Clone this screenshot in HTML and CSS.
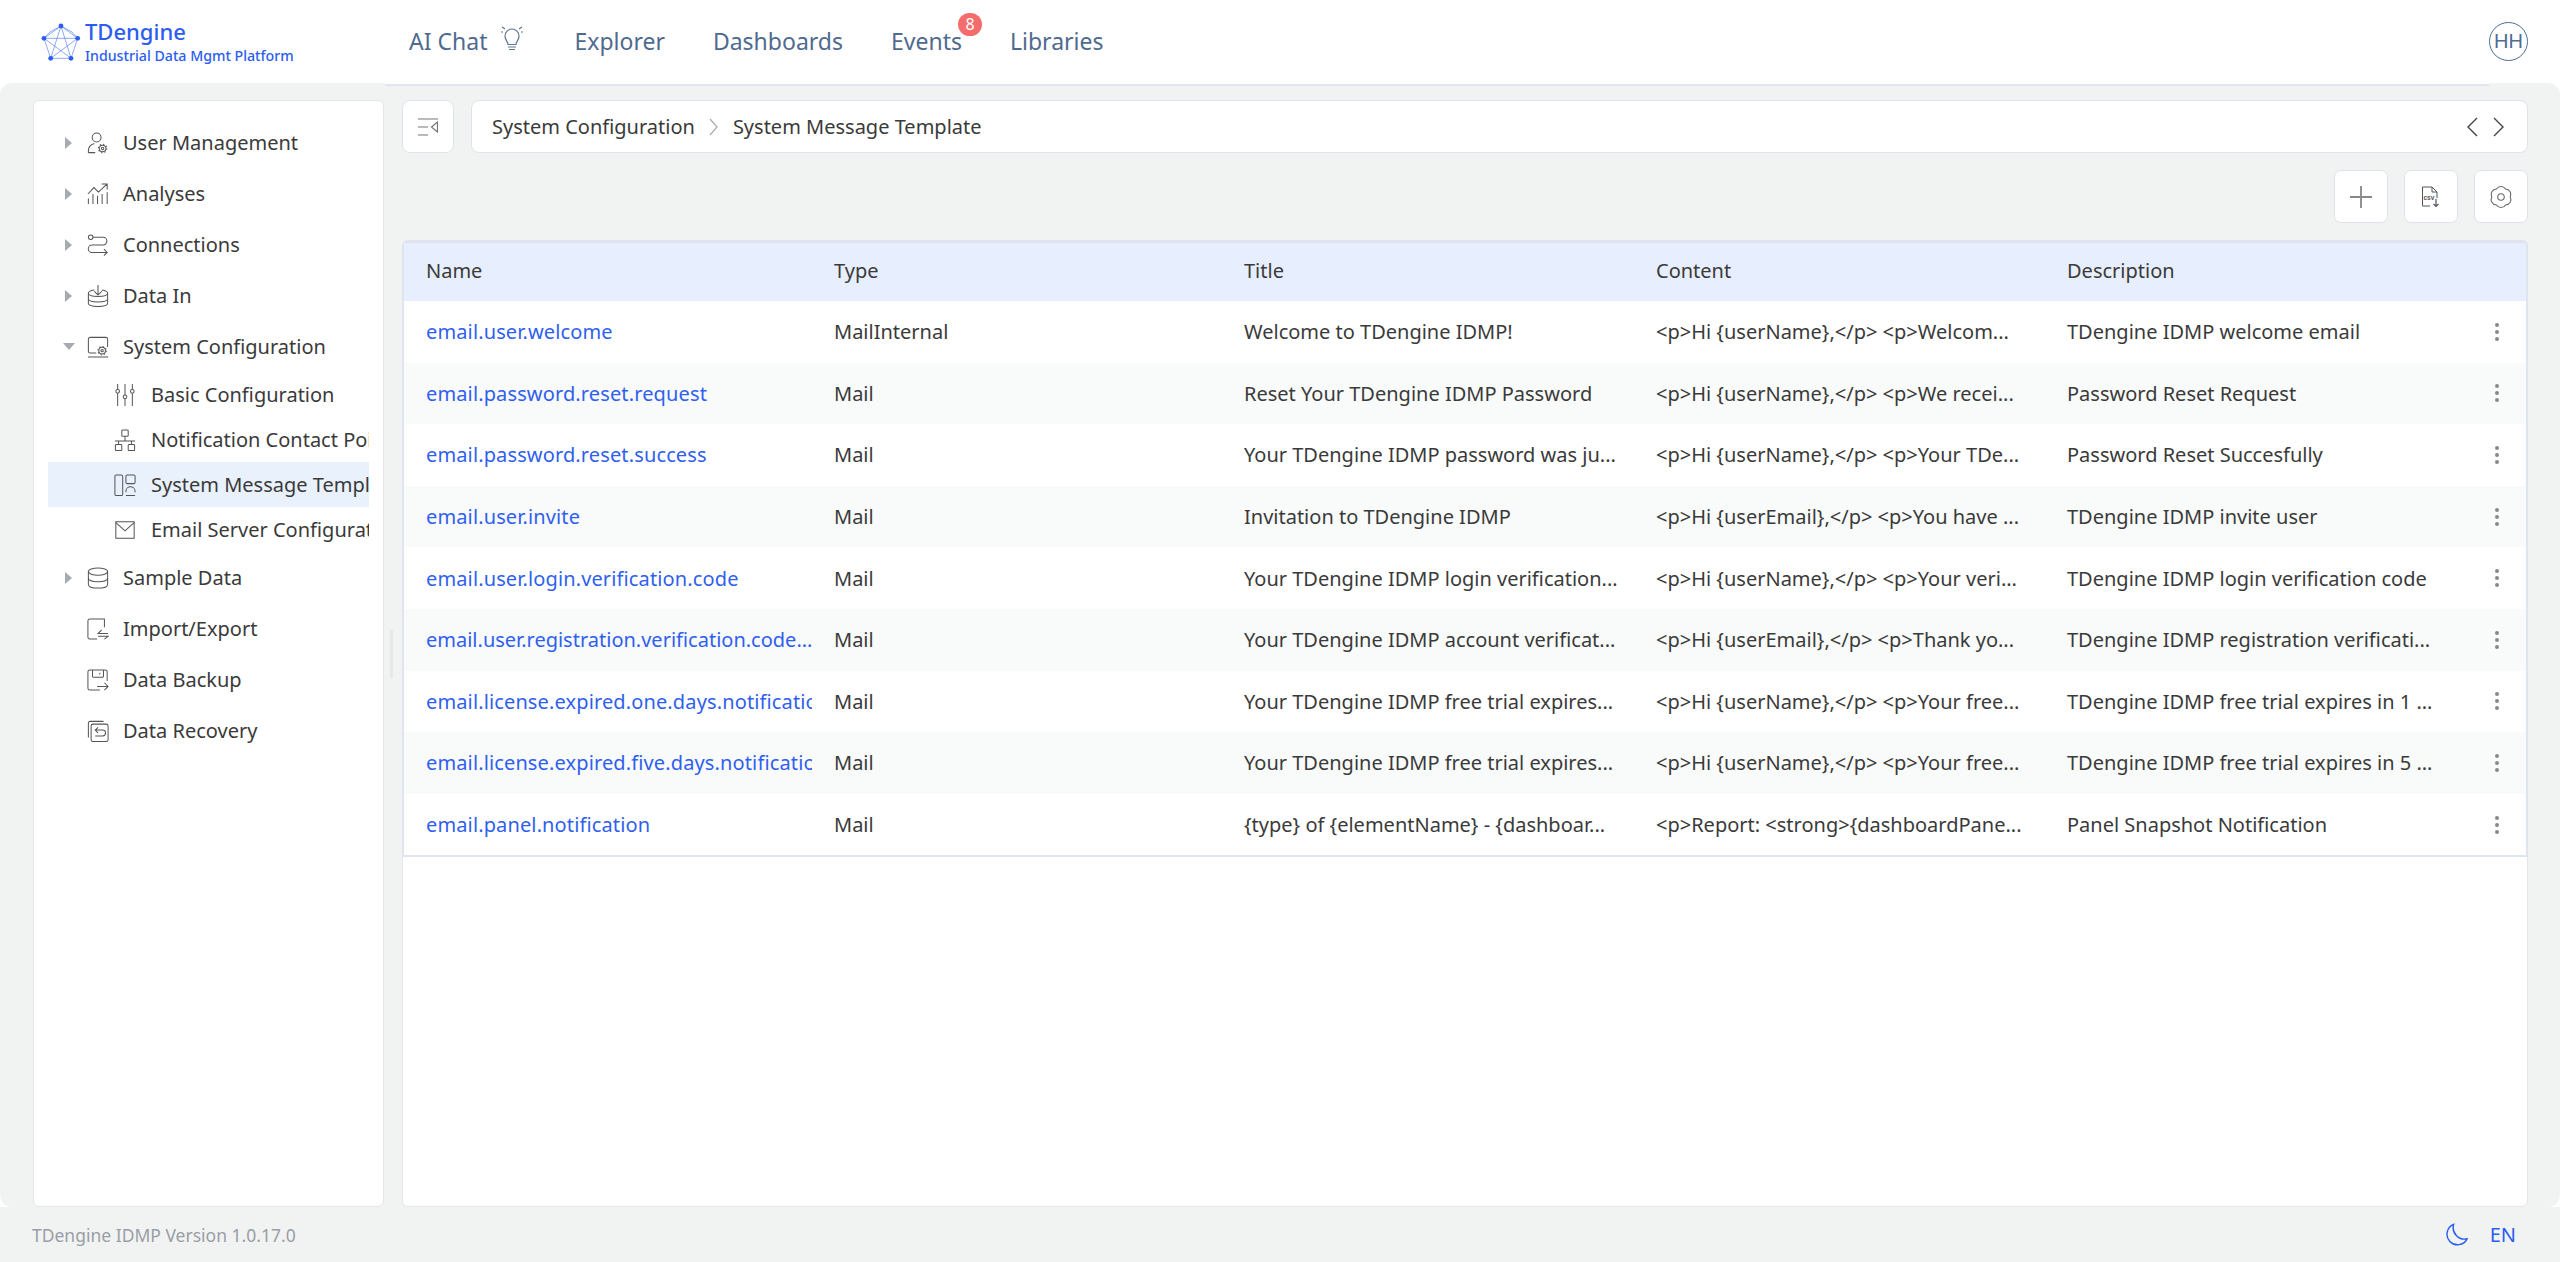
FILE: index.html
```html
<!DOCTYPE html>
<html lang="en">
<head>
  <meta charset="UTF-8" />
  <title>System Message Template</title>
  <link rel="stylesheet" href="styles.css">
</head>
<body>
  <header class="topbar">
    <div class="brand">
      <svg class="brand-logo" viewBox="0 0 40 38">
        <g fill="none" stroke="#2b5df0" stroke-width="0.7" opacity="0.75">
          <path d="M20 3 36.7 15.3 30 35.3H9.7L3 15.3Z"/>
          <path d="M20 3 30 35.3 3 15.3H36.7L9.7 35.3Z"/>
          <path d="M20 3 9 9 3 15.3M20 3 31 9 36.7 15.3"/>
        </g>
        <g fill="#2b5df0">
          <circle cx="20" cy="3" r="2.4"/>
          <circle cx="36.7" cy="15.3" r="2.4"/>
          <circle cx="30" cy="35.3" r="2.4"/>
          <circle cx="9.7" cy="35.3" r="2.4"/>
          <circle cx="3" cy="15.3" r="2.4"/>
        </g>
      </svg>
      <div class="brand-text">
        <div class="brand-name">TDengine</div>
        <div class="brand-sub">Industrial Data Mgmt Platform</div>
      </div>
    </div>
    <nav class="nav">
      <a class="nav-item nav-ai">AI Chat
        <svg class="nav-bulb" viewBox="0 0 22 26" fill="none" stroke="#5b7598" stroke-width="1.2">
          <path d="M7 18.5c0-3-3-4-3-8.5a7 7 0 0 1 14 0c0 4.500-3 5.500-3 8.500Z"/>
          <path d="M7 21h8M8 23.500h6M4 3 1 1M18 3l3-2M2 6H0M20 6h2"/>
        </svg>
      </a>
      <a class="nav-item">Explorer</a>
      <a class="nav-item">Dashboards</a>
      <a class="nav-item">Events<span class="badge">8</span></a>
      <a class="nav-item">Libraries</a>
    </nav>
    <div class="user"><span class="avatar">HH</span></div>
  </header>

  <div class="main">
    <aside class="sidebar">
      <div class="tree-row">
        <span class="caret"></span>
        <svg class="icon" viewBox="0 0 24 24"><circle cx="10.500" cy="6" r="4.800"/><path d="M1.500 22.500v-2c0-4.500 3-7 6.500-8M1.500 22.500H9"/><circle cx="17" cy="18" r="3.600"/><circle cx="17" cy="18" r="1.300"/><circle cx="17" cy="18" r="4.600" stroke-dasharray="1.500 2.100"/></svg>
        <span class="tree-label">User Management</span>
      </div>
      <div class="tree-row">
        <span class="caret"></span>
        <svg class="icon" viewBox="0 0 24 24"><path d="M1.500 17v6M6.500 12v11M11.500 14v9M16.500 12v11M22 10v13M1 12 7.500 5l5 5L22 1M16 1h6v6"/></svg>
        <span class="tree-label">Analyses</span>
      </div>
      <div class="tree-row">
        <span class="caret"></span>
        <svg class="icon" viewBox="0 0 24 24"><circle cx="4" cy="3.500" r="2.500"/><path d="M6.500 3.500h11a4.200 4.200 0 0 1 0 8.400H5.500a4.100 4.100 0 0 0 0 8.200H22M18.500 16.500l3.500 3.600-3.500 3.400"/></svg>
        <span class="tree-label">Connections</span>
      </div>
      <div class="tree-row">
        <span class="caret"></span>
        <svg class="icon" viewBox="0 0 24 24"><path d="M8 5.500c-4 .6-6.500 1.800-6.500 3.500v11c0 2 4.500 3.500 10.500 3.500S22.500 22 22.500 20V9c0-1.700-2.500-2.900-6.500-3.500"/><path d="M1.500 9c0 2 4.500 3.500 10.500 3.500S22.500 11 22.500 9M1.500 15c0 2 4.500 3.500 10.500 3.500s10.500-1.500 10.500-3.500M12 0v10.500M8 7l4 4 4-4"/></svg>
        <span class="tree-label">Data In</span>
      </div>
      <div class="tree-row">
        <span class="caret caret-open"></span>
        <svg class="icon" viewBox="0 0 24 24"><path d="M10 18.500H3.500a2 2 0 0 1-2-2V3.500a2 2 0 0 1 2-2h17a2 2 0 0 1 2 2V12M1 23h22"/><circle cx="16.500" cy="16" r="3.600"/><circle cx="16.500" cy="16" r="1.300"/><circle cx="16.500" cy="16" r="4.600" stroke-dasharray="1.500 2.100"/></svg>
        <span class="tree-label">System Configuration</span>
      </div>
      <div class="tree-row tree-child">
        <svg class="icon" viewBox="0 0 24 24"><path d="M4 0v6M4 10v14M12 0v12M12 16v8M20 0v6M20 10v14"/><circle cx="4" cy="8" r="2"/><circle cx="12" cy="14" r="2"/><circle cx="20" cy="8" r="2"/></svg>
        <span class="tree-label">Basic Configuration</span>
      </div>
      <div class="tree-row tree-child">
        <svg class="icon" viewBox="0 0 24 24"><rect x="8.500" y="1" width="7" height="7" rx="1"/><path d="M12 8v5M5 17v-4h14v4M1 13h22"/><rect x="1.500" y="17" width="7" height="6.500" rx="1"/><rect x="15.500" y="17" width="7" height="6.500" rx="1"/></svg>
        <span class="tree-label">Notification Contact Point</span>
      </div>
      <div class="tree-row tree-child tree-selected">
        <svg class="icon" viewBox="0 0 24 24"><rect x="1" y="1" width="8.500" height="22.500" rx="1.500"/><rect x="13" y="1" width="10" height="9.500" rx="1.500"/><path d="M13 20v-1a5 5 0 0 1 10 0v1M13 23.500h10"/></svg>
        <span class="tree-label">System Message Template</span>
      </div>
      <div class="tree-row tree-child">
        <svg class="icon" viewBox="0 0 24 24"><rect x="2" y="3" width="20" height="18"/><path d="M2 4l10 9 10-9"/></svg>
        <span class="tree-label">Email Server Configuration</span>
      </div>
      <div class="tree-row">
        <span class="caret"></span>
        <svg class="icon" viewBox="0 0 24 24"><ellipse cx="12" cy="5" rx="10.500" ry="4"/><path d="M1.500 5v14c0 2.500 4.500 4 10.500 4s10.500-1.500 10.500-4V5M1.500 12c0 2.500 4.500 4 10.500 4s10.500-1.500 10.500-4"/></svg>
        <span class="tree-label">Sample Data</span>
      </div>
      <div class="tree-row">
        <span class="caret caret-none"></span>
        <svg class="icon" viewBox="0 0 24 24"><path d="M19 10V1H3a2 2 0 0 0-2 2v18a2 2 0 0 0 2 2h8M16 13l-4 4h11M12 20h11l-4 3"/></svg>
        <span class="tree-label">Import/Export</span>
      </div>
      <div class="tree-row">
        <span class="caret caret-none"></span>
        <svg class="icon" viewBox="0 0 24 24"><path d="M22 13V3a2 2 0 0 0-2-2H3a2 2 0 0 0-2 2v18a2 2 0 0 0 2 2h11M6 1v7a1 1 0 0 0 1 1h10a1 1 0 0 0 1-1V1M14 4v2M11 19h12M19 15l4 4-4 4"/></svg>
        <span class="tree-label">Data Backup</span>
      </div>
      <div class="tree-row">
        <span class="caret caret-none"></span>
        <svg class="icon" viewBox="0 0 24 24"><path d="M1.500 19V3.500a2 2 0 0 1 2-2H18"/><rect x="4.500" y="4.500" width="18.500" height="19" rx="2"/><path d="M9 11h8a3 3 0 0 1 0 6.500H9M12 8l-3 3 3 3"/></svg>
        <span class="tree-label">Data Recovery</span>
      </div>
    </aside>
    <div class="resizer"></div>

    <section class="content">
      <div class="crumb-row">
        <button class="collapse-btn">
          <svg viewBox="0 0 20 18" fill="none" stroke="#777" stroke-width="1.200"><path d="M0 1h20M0 9h10M0 17h10M19.500 4v10L13.500 9Z"/></svg>
        </button>
        <div class="crumbs">
          <span>System Configuration</span>
          <svg class="crumb-sep" viewBox="0 0 10 18" fill="none" stroke="#aaa" stroke-width="1.200"><path d="M1 1l7 8-7 8"/></svg>
          <span>System Message Template</span>
          <div class="crumb-nav">
            <svg viewBox="0 0 12 20" fill="none" stroke="#444" stroke-width="1.400"><path d="M11 1 2 10l9 9"/></svg>
            <svg viewBox="0 0 12 20" fill="none" stroke="#444" stroke-width="1.400"><path d="M1 1l9 9-9 9"/></svg>
          </div>
        </div>
      </div>

      <div class="toolbar">
        <button class="tool-btn">
          <svg viewBox="0 0 18 18" fill="none" stroke="#888" stroke-width="1.500"><path d="M9 0v18M0 9h18"/></svg>
        </button>
        <button class="tool-btn">
          <svg viewBox="0 0 20 22" fill="none" stroke="#555" stroke-width="1"><path d="M9 20H1.500V1H11l5 5v6M11 1v5h5"/><path d="M15 13v7M12.500 18l2.500 2.500 2.500-2.500" stroke-width="1.200"/><text x="2.500" y="13.500" class="csv-text">csv</text></svg>
        </button>
        <button class="tool-btn tool-gear">
          <svg viewBox="0 0 24 24" fill="none" stroke="#666" stroke-width="1"><path d="M20.500 12A5 5 0 0 1 16.250 19.360 5 5 0 0 1 7.750 19.360 5 5 0 0 1 3.500 12 5 5 0 0 1 7.750 4.640 5 5 0 0 1 16.250 4.640 5 5 0 0 1 20.500 12Z"/><circle cx="12" cy="12" r="3"/></svg>
        </button>
      </div>

      <div class="table-card">
        <table class="grid">
          <colgroup>
            <col class="col-name"><col class="col-type"><col class="col-title"><col class="col-content"><col class="col-desc"><col>
          </colgroup>
          <thead>
            <tr><th>Name</th><th>Type</th><th>Title</th><th>Content</th><th>Description</th><th></th></tr>
          </thead>
          <tbody>
            <tr>
              <td><a>email.user.welcome</a></td><td>MailInternal</td><td>Welcome to TDengine IDMP!</td>
              <td>&lt;p&gt;Hi {userName},&lt;/p&gt; &lt;p&gt;Welcom...</td><td>TDengine IDMP welcome email</td>
              <td class="more"><span class="dots"><i></i><i></i><i></i></span></td>
            </tr>
            <tr>
              <td><a>email.password.reset.request</a></td><td>Mail</td><td>Reset Your TDengine IDMP Password</td>
              <td>&lt;p&gt;Hi {userName},&lt;/p&gt; &lt;p&gt;We recei...</td><td>Password Reset Request</td>
              <td class="more"><span class="dots"><i></i><i></i><i></i></span></td>
            </tr>
            <tr>
              <td><a>email.password.reset.success</a></td><td>Mail</td><td>Your TDengine IDMP password was ju...</td>
              <td>&lt;p&gt;Hi {userName},&lt;/p&gt; &lt;p&gt;Your TDe...</td><td>Password Reset Succesfully</td>
              <td class="more"><span class="dots"><i></i><i></i><i></i></span></td>
            </tr>
            <tr>
              <td><a>email.user.invite</a></td><td>Mail</td><td>Invitation to TDengine IDMP</td>
              <td>&lt;p&gt;Hi {userEmail},&lt;/p&gt; &lt;p&gt;You have ...</td><td>TDengine IDMP invite user</td>
              <td class="more"><span class="dots"><i></i><i></i><i></i></span></td>
            </tr>
            <tr>
              <td><a>email.user.login.verification.code</a></td><td>Mail</td><td>Your TDengine IDMP login verification...</td>
              <td>&lt;p&gt;Hi {userName},&lt;/p&gt; &lt;p&gt;Your veri...</td><td>TDengine IDMP login verification code</td>
              <td class="more"><span class="dots"><i></i><i></i><i></i></span></td>
            </tr>
            <tr>
              <td><a class="tight">email.user.registration.verification.code...</a></td><td>Mail</td><td>Your TDengine IDMP account verificat...</td>
              <td>&lt;p&gt;Hi {userEmail},&lt;/p&gt; &lt;p&gt;Thank yo...</td><td>TDengine IDMP registration verificati...</td>
              <td class="more"><span class="dots"><i></i><i></i><i></i></span></td>
            </tr>
            <tr>
              <td><a>email.license.expired.one.days.notification</a></td><td>Mail</td><td>Your TDengine IDMP free trial expires...</td>
              <td>&lt;p&gt;Hi {userName},&lt;/p&gt; &lt;p&gt;Your free...</td><td>TDengine IDMP free trial expires in 1 ...</td>
              <td class="more"><span class="dots"><i></i><i></i><i></i></span></td>
            </tr>
            <tr>
              <td><a>email.license.expired.five.days.notification</a></td><td>Mail</td><td>Your TDengine IDMP free trial expires...</td>
              <td>&lt;p&gt;Hi {userName},&lt;/p&gt; &lt;p&gt;Your free...</td><td>TDengine IDMP free trial expires in 5 ...</td>
              <td class="more"><span class="dots"><i></i><i></i><i></i></span></td>
            </tr>
            <tr>
              <td><a>email.panel.notification</a></td><td>Mail</td><td>{type} of {elementName} - {dashboar...</td>
              <td>&lt;p&gt;Report: &lt;strong&gt;{dashboardPane...</td><td>Panel Snapshot Notification</td>
              <td class="more"><span class="dots"><i></i><i></i><i></i></span></td>
            </tr>
          </tbody>
        </table>
      </div>
    </section>
  </div>

  <footer class="footer">
    <span>TDengine IDMP Version 1.0.17.0</span>
    <div class="footer-right">
      <svg class="moon" viewBox="0 0 24 24" fill="none" stroke="#2b5df0" stroke-width="1.500"><path d="M9 1.500A11 11 0 1 0 23 16.500 12 12 0 0 1 9 1.500Z"/></svg>
      <span class="lang">EN</span>
    </div>
  </footer>
</body>
</html>
```

FILE: styles.css
```css
* {
  box-sizing: border-box;
}

html, body {
  height: 100%;
}

body {
  margin: 0;
  display: flex;
  flex-direction: column;
  background: #fff;
  font-family: "Noto Sans", sans-serif;
  font-size: 20px;
  color: #3a3a3a;
}

/* top bar */
.topbar {
  display: flex;
  height: 83px;
  flex: none;
  position: relative;
  z-index: 2;
}

.brand {
  width: 385px;
  height: 83px;
  display: flex;
  align-items: center;
  padding-left: 41px;
  gap: 4px;
}

.brand-logo {
  width: 40px;
  height: 38px;
}

.brand-text {
  color: #2b5df0;
  font-weight: 500;
  line-height: 1;
}

.brand-name {
  font-size: 22px;
  margin-bottom: 7px;
}

.brand-sub {
  font-size: 14.200px;
}

.nav {
  flex: 1;
  height: 86px;
  background: #fff;
  border-bottom: 2px solid #e0e4ee;
  display: flex;
  align-items: center;
  padding-left: 24px;
  padding-bottom: 2px;
}

.nav-item {
  position: relative;
  font-size: 23px;
  color: #4f6a8f;
  margin-right: 48px;
}

.nav-ai {
  display: flex;
  align-items: center;
  gap: 14px;
  margin-right: 51px;
}

.nav-bulb {
  width: 22px;
  height: 26px;
  margin-top: -4px;
}

.badge {
  position: absolute;
  top: -12px;
  right: -20px;
  width: 24px;
  height: 23px;
  border-radius: 12px;
  background: #f56c6c;
  color: #fff;
  font-size: 16px;
  line-height: 23px;
  text-align: center;
}

.user {
  width: 71px;
  height: 83px;
  padding-top: 22px;
}

.avatar {
  display: block;
  width: 39px;
  height: 39px;
  border: 1px solid #4f6d95;
  border-radius: 50%;
  color: #4f6d95;
  font-family: "Liberation Sans", sans-serif;
  font-size: 20px;
  line-height: 37px;
  text-align: center;
}

/* main area */
.main {
  flex: 1;
  min-height: 0;
  display: flex;
  position: relative;
  background: #f1f3f3;
  border-radius: 12px;
  padding: 17px 32px 0 33px;
}

.sidebar {
  width: 351px;
  flex: none;
  background: #fff;
  border: 1px solid #e4e6ea;
  border-radius: 6px;
  padding: 16px 14px;
}

.resizer {
  position: absolute;
  left: 390px;
  top: 547px;
  width: 3px;
  height: 48px;
  background: #e6e8e8;
}

.tree-row {
  display: flex;
  align-items: center;
  height: 51px;
  padding-left: 17px;
  white-space: nowrap;
  overflow: hidden;
}

.tree-child {
  height: 45px;
  padding-left: 66px;
}

.tree-child .icon {
  margin-right: 15px;
}

.tree-selected {
  background: #e9f1fd;
}

.caret {
  width: 0;
  height: 0;
  flex: none;
  margin-right: 15px;
  border-style: solid;
  border-width: 6px 0 6px 7px;
  border-color: transparent transparent transparent #a6abb2;
}

.caret-open {
  margin-left: -2px;
  margin-right: 12px;
  border-width: 7px 6px 0;
  border-color: #a6abb2 transparent transparent;
}

.caret-none {
  visibility: hidden;
}

.icon {
  width: 22px;
  height: 22px;
  flex: none;
  fill: none;
  stroke: #555;
  stroke-width: 1.1;
  margin-right: 14px;
}

/* breadcrumb */
.content {
  flex: 1;
  min-width: 0;
  margin-left: 18px;
  display: flex;
  flex-direction: column;
}

.crumb-row {
  display: flex;
  gap: 17px;
  height: 53px;
  flex: none;
}

.collapse-btn {
  width: 52px;
  background: #fff;
  border: 1px solid #e0e3ea;
  border-radius: 8px;
  padding: 0;
}

.collapse-btn svg {
  display: block;
  width: 20px;
  height: 18px;
  margin: 0 auto;
}

.crumbs {
  flex: 1;
  display: flex;
  align-items: center;
  background: #fff;
  border: 1px solid #e0e3ea;
  border-radius: 8px;
  padding: 0 22px 0 20px;
}

.crumb-sep {
  width: 10px;
  height: 18px;
  margin: 0 14px;
}

.crumb-nav {
  margin-left: auto;
  display: flex;
  gap: 15px;
}

.crumb-nav svg {
  width: 12px;
  height: 20px;
}

/* toolbar */
.toolbar {
  display: flex;
  justify-content: flex-end;
  gap: 16px;
  margin: 17px 0;
  flex: none;
}

.tool-btn {
  width: 54px;
  height: 53px;
  background: #fff;
  border: 1px solid #e0e3ea;
  border-radius: 7px;
  padding: 0;
  display: flex;
  align-items: center;
  justify-content: center;
}

.tool-btn svg {
  width: 22px;
  height: 22px;
}

.tool-gear svg {
  width: 26px;
  height: 26px;
}

.csv-text {
  font-family: "Liberation Sans", sans-serif;
  font-size: 6.500px;
  font-weight: 700;
  fill: #555;
  stroke: none;
}

/* table */
.table-card {
  flex: 1;
  background: #fff;
  border: 1px solid #e4e6ea;
  border-radius: 6px;
  min-height: 0;
}

.grid {
  table-layout: fixed;
  border-collapse: separate;
  border-spacing: 0;
  border: 2px solid #e0e4ee;
  border-top-width: 3px;
  border-radius: 6px 6px 0 0;
  margin: -1px;
  width: calc(100% + 2px);
}

.col-name {
  width: 408px;
}

.col-type {
  width: 410px;
}

.col-title {
  width: 412px;
}

.col-content {
  width: 411px;
}

.col-desc {
  width: 411px;
}

.grid th,
.grid td {
  padding: 0 21px 0 22px;
  white-space: nowrap;
  overflow: hidden;
  font-weight: 400;
  text-align: left;
}

.grid th {
  height: 58px;
  padding-bottom: 3px;
  background: #e7eefd;
}

.grid td {
  height: 61.600px;
}

.grid tbody tr:nth-child(even) td {
  background: #f9fafa;
}

.grid a {
  color: #2f5ff0;
  letter-spacing: 0.13px;
}

.grid a.tight {
  letter-spacing: 0;
}

.grid td.more {
  padding: 0 0 0 39px;
}

.dots {
  display: flex;
  flex-direction: column;
  gap: 3px;
}

.dots i {
  width: 4px;
  height: 4px;
  border-radius: 50%;
  background: #888;
}

/* footer */
.footer {
  height: 55px;
  flex: none;
  display: flex;
  align-items: center;
  justify-content: space-between;
  background: #f1f3f3;
  padding: 0 44px 0 32px;
  font-size: 17.500px;
  color: #9a9ea5;
}

.footer-right {
  display: flex;
  align-items: center;
  gap: 22px;
}

.moon {
  width: 23px;
  height: 23px;
}

.lang {
  color: #2b5df0;
  font-size: 20px;
}
```
